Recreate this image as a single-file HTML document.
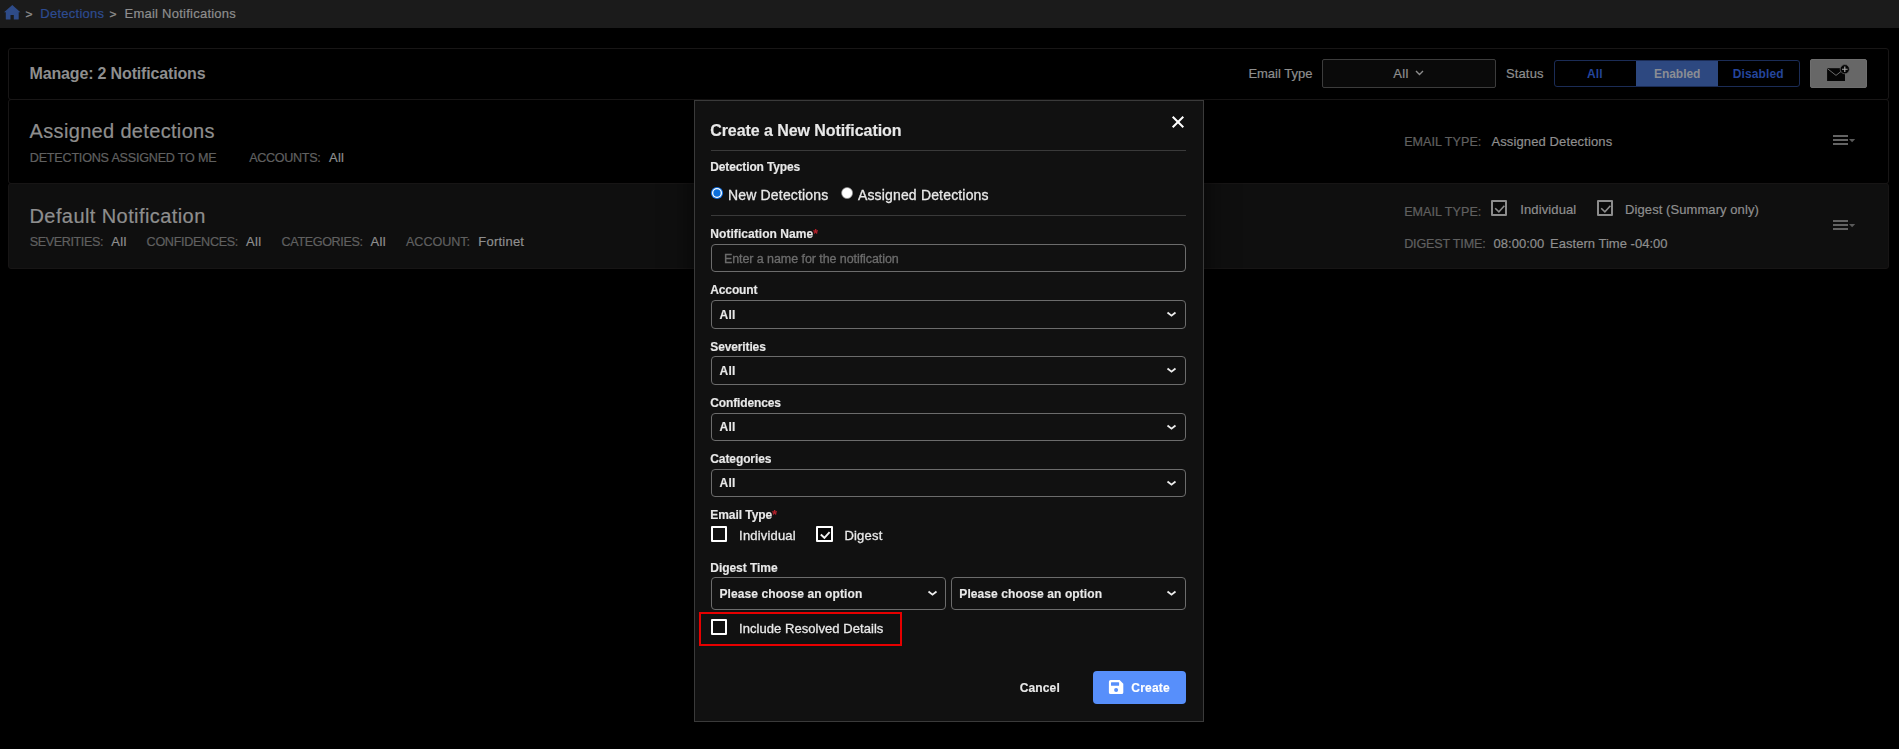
<!DOCTYPE html>
<html lang="en">
<head>
<meta charset="utf-8">
<title>Email Notifications</title>
<style>
*{box-sizing:border-box;margin:0;padding:0}
html,body{width:1899px;height:749px;overflow:hidden;background:#000}
body{font-family:"Liberation Sans",Arial,sans-serif;position:relative}
.tx,.b{position:absolute;white-space:nowrap}
.layer{position:absolute;left:0;top:0;width:1899px;height:749px;will-change:transform}
.rg{-webkit-text-stroke:0.2px currentColor}
.layer .tx{-webkit-text-stroke:0.15px currentColor}
.layer .rg{-webkit-text-stroke:0.3px currentColor}
.sel{position:absolute;border:1px solid #6c6c6c;border-radius:4px;background:#111}
.cb{position:absolute;width:16px;height:16px;border:2px solid #fff;border-radius:1px}
</style>
</head>
<body>
<!-- breadcrumb bar -->
<div class="b" style="left:0;top:0;width:1899px;height:28px;background:#1b1b1b"></div>
<svg class="b" style="left:4px;top:5px" width="17" height="15" viewBox="0 0 17 15"><path d="M8.3 0 L16.4 7.2 H14.7 V14 Q14.7 14.6 14.1 14.6 H9.8 V10.1 H6.5 V14.6 H2.4 Q1.8 14.6 1.8 14 V7.2 H0 Z" fill="#2e4b88"/></svg>
<!-- header card -->
<div class="b" style="left:8px;top:48px;width:1881px;height:52px;border:1px solid #181616;border-radius:3px"></div>
<div class="b" style="left:1322px;top:59px;width:174px;height:29px;border:1px solid #3c3c3c;border-radius:2px;background:#0a0a0a"></div>
<svg class="b" style="left:1415px;top:70px" width="9" height="6" viewBox="0 0 9 6"><path d="M1 1 L4.5 4.5 L8 1" fill="none" stroke="#8c8c8c" stroke-width="1.4"/></svg>
<div class="b" style="left:1554px;top:60px;width:246px;height:27px;border:1px solid #1b2c56;border-radius:3px;overflow:hidden">
  <div class="b" style="left:81px;top:-1px;width:82px;height:27px;background:#2d4880"></div>
</div>
<div class="b" style="left:1810px;top:59px;width:57px;height:29px;background:#676767;border:1px solid #6e6e6e;border-radius:2px"></div>
<svg class="b" style="left:1824px;top:62px" width="28" height="22" viewBox="0 0 28 22"><rect x="3.1" y="6.2" width="17.9" height="12.8" fill="#050505"/><path d="M3.4 6.6 L12 13.4 L20.6 6.6" fill="none" stroke="#6b6b6b" stroke-width="1"/><circle cx="20.8" cy="7.2" r="4.6" fill="#050505" stroke="#676767" stroke-width="0.7"/><path d="M20.8 4.4 V10 M18 7.2 H23.6" stroke="#a8a8a8" stroke-width="1.15"/></svg>
<!-- row 1 -->
<div class="b" style="left:8px;top:99px;width:1881px;height:85px;border:1px solid #181616;border-radius:3px"></div>
<svg class="b" style="left:1833px;top:135px" width="23" height="11" viewBox="0 0 23 11"><path d="M0 0 H15 V2 H0 Z M0 4 H15 V6 H0 Z M0 8 H15 V10 H0 Z" fill="#636363"/><path d="M16 4 H22.2 L19.1 7.2 Z" fill="#5a5a5a"/></svg>
<!-- row 2 -->
<div class="b" style="left:8px;top:183px;width:1881px;height:86px;background:#0f0f0f;border:1px solid #171515;border-radius:3px"></div>
<svg class="b" style="left:1833px;top:220px" width="23" height="11" viewBox="0 0 23 11"><path d="M0 0 H15 V2 H0 Z M0 4 H15 V6 H0 Z M0 8 H15 V10 H0 Z" fill="#636363"/><path d="M16 4 H22.2 L19.1 7.2 Z" fill="#5a5a5a"/></svg>
<div class="cb" style="left:1491px;top:200px;border-color:#8c8c8c;background:#0a0a0a"></div>
<svg class="b" style="left:1491px;top:200px" width="16" height="16" viewBox="0 0 16 16"><path d="M4.2 8.2 L7.9 11.8 L13.4 5.8" fill="none" stroke="#8c8c8c" stroke-width="1.6"/></svg>
<div class="cb" style="left:1597px;top:200px;border-color:#8c8c8c;background:#0a0a0a"></div>
<svg class="b" style="left:1597px;top:200px" width="16" height="16" viewBox="0 0 16 16"><path d="M4.2 8.2 L7.9 11.8 L13.4 5.8" fill="none" stroke="#8c8c8c" stroke-width="1.6"/></svg>


<span class="tx rg" style="left:25.6px;top:7.5px;font-size:12px;line-height:12px;font-weight:normal;color:#8e8e8e;letter-spacing:0.404px;transform:scaleY(.88);transform-origin:50% 70%;-webkit-text-stroke:0.35px currentColor">&gt;</span>
<span class="tx rg" style="left:40.3px;top:7.0px;font-size:13px;line-height:13px;font-weight:normal;color:#2d4b91;letter-spacing:0.256px">Detections</span>
<span class="tx rg" style="left:109.4px;top:7.5px;font-size:12px;line-height:12px;font-weight:normal;color:#8e8e8e;letter-spacing:0.104px;transform:scaleY(.88);transform-origin:50% 70%;-webkit-text-stroke:0.35px currentColor">&gt;</span>
<span class="tx rg" style="left:124.5px;top:7.0px;font-size:13px;line-height:13px;font-weight:normal;color:#8e8e8e;letter-spacing:0.244px">Email Notifications</span>
<span class="tx" style="left:29.5px;top:66.0px;font-size:16px;line-height:16px;font-weight:bold;color:#8e8e8e;letter-spacing:-0.157px">Manage: 2 Notifications</span>
<span class="tx rg" style="left:1248.4px;top:67.0px;font-size:13px;line-height:13px;font-weight:normal;color:#8e8e8e;letter-spacing:-0.010px">Email Type</span>
<span class="tx rg" style="left:1393.3px;top:67.0px;font-size:13px;line-height:13px;font-weight:normal;color:#8e8e8e;letter-spacing:0.376px">All</span>
<span class="tx rg" style="left:1505.9px;top:67.0px;font-size:13px;line-height:13px;font-weight:normal;color:#8e8e8e;letter-spacing:0.153px">Status</span>
<span class="tx" style="left:1586.9px;top:68.0px;font-size:12px;line-height:12px;font-weight:bold;color:#24459b;letter-spacing:0.159px">All</span>
<span class="tx" style="left:1654.0px;top:68.0px;font-size:12px;line-height:12px;font-weight:bold;color:#8a8d94;letter-spacing:-0.053px">Enabled</span>
<span class="tx" style="left:1732.8px;top:68.0px;font-size:12px;line-height:12px;font-weight:bold;color:#24459b;letter-spacing:0.101px">Disabled</span>
<span class="tx rg" style="left:29.6px;top:121.0px;font-size:20px;line-height:20px;font-weight:normal;color:#8e8e8e;letter-spacing:0.331px">Assigned detections</span>
<span class="tx rg" style="left:29.8px;top:152.0px;font-size:12.6px;line-height:12.6px;font-weight:normal;color:#606060;letter-spacing:-0.217px">DETECTIONS ASSIGNED TO ME</span>
<span class="tx rg" style="left:249.3px;top:152.0px;font-size:12.6px;line-height:12.6px;font-weight:normal;color:#606060;letter-spacing:-0.346px">ACCOUNTS:</span>
<span class="tx rg" style="left:329.0px;top:151.0px;font-size:13px;line-height:13px;font-weight:normal;color:#8e8e8e;letter-spacing:0.209px">All</span>
<span class="tx rg" style="left:1404.2px;top:136.0px;font-size:12.6px;line-height:12.6px;font-weight:normal;color:#606060;letter-spacing:0.014px">EMAIL TYPE:</span>
<span class="tx rg" style="left:1491.4px;top:135.0px;font-size:13px;line-height:13px;font-weight:normal;color:#8e8e8e;letter-spacing:0.124px">Assigned Detections</span>
<span class="tx rg" style="left:29.5px;top:206.0px;font-size:20px;line-height:20px;font-weight:normal;color:#8e8e8e;letter-spacing:0.416px">Default Notification</span>
<span class="tx rg" style="left:29.7px;top:236.0px;font-size:12.6px;line-height:12.6px;font-weight:normal;color:#606060;letter-spacing:-0.394px">SEVERITIES:</span>
<span class="tx rg" style="left:111.3px;top:235.0px;font-size:13px;line-height:13px;font-weight:normal;color:#8e8e8e;letter-spacing:0.276px">All</span>
<span class="tx rg" style="left:146.6px;top:236.0px;font-size:12.6px;line-height:12.6px;font-weight:normal;color:#606060;letter-spacing:-0.310px">CONFIDENCES:</span>
<span class="tx rg" style="left:246.0px;top:235.0px;font-size:13px;line-height:13px;font-weight:normal;color:#8e8e8e;letter-spacing:0.309px">All</span>
<span class="tx rg" style="left:281.6px;top:236.0px;font-size:12.6px;line-height:12.6px;font-weight:normal;color:#606060;letter-spacing:-0.371px">CATEGORIES:</span>
<span class="tx rg" style="left:370.6px;top:235.0px;font-size:13px;line-height:13px;font-weight:normal;color:#8e8e8e;letter-spacing:0.276px">All</span>
<span class="tx rg" style="left:406.0px;top:236.0px;font-size:12.6px;line-height:12.6px;font-weight:normal;color:#606060;letter-spacing:-0.052px">ACCOUNT:</span>
<span class="tx rg" style="left:478.3px;top:235.0px;font-size:13px;line-height:13px;font-weight:normal;color:#8e8e8e;letter-spacing:0.225px">Fortinet</span>
<span class="tx rg" style="left:1404.2px;top:206.0px;font-size:12.6px;line-height:12.6px;font-weight:normal;color:#606060;letter-spacing:0.014px">EMAIL TYPE:</span>
<span class="tx rg" style="left:1520.2px;top:203.0px;font-size:13px;line-height:13px;font-weight:normal;color:#8e8e8e;letter-spacing:0.124px">Individual</span>
<span class="tx rg" style="left:1625.1px;top:203.0px;font-size:13px;line-height:13px;font-weight:normal;color:#8e8e8e;letter-spacing:0.075px">Digest (Summary only)</span>
<span class="tx rg" style="left:1404.2px;top:238.0px;font-size:12.6px;line-height:12.6px;font-weight:normal;color:#606060;letter-spacing:-0.180px">DIGEST TIME:</span>
<span class="tx rg" style="left:1493.6px;top:237.0px;font-size:13px;line-height:13px;font-weight:normal;color:#8e8e8e;letter-spacing:0.021px">08:00:00</span>
<span class="tx rg" style="left:1550.1px;top:237.0px;font-size:13px;line-height:13px;font-weight:normal;color:#8e8e8e;letter-spacing:0.022px">Eastern Time -04:00</span>
<div class="layer">
<!-- modal -->
<div class="b" style="left:694px;top:100px;width:510px;height:622px;background:#111;border:1px solid #3a3a3a;box-shadow:0 0 26px rgba(0,0,0,.65)"></div>
<svg class="b" style="left:1171px;top:115px" width="14" height="14" viewBox="0 0 14 14"><path d="M1.7 1.7 L12.3 12.3 M12.3 1.7 L1.7 12.3" stroke="#fff" stroke-width="2"/></svg>
<div class="b" style="left:711px;top:150px;width:475px;height:1px;background:#3a3a3a"></div>
<div class="b" style="left:711px;top:215px;width:475px;height:1px;background:#3a3a3a"></div>
<!-- radios -->
<svg class="b" style="left:710px;top:186px" width="14" height="14" viewBox="0 0 14 14"><circle cx="7" cy="7" r="6.1" fill="#1273e6"/><circle cx="7" cy="7" r="5" fill="#fff"/><circle cx="7" cy="7" r="3.7" fill="#0b6fdc"/></svg>
<svg class="b" style="left:840px;top:186px" width="14" height="14" viewBox="0 0 14 14"><circle cx="7.1" cy="7" r="5.5" fill="#fff" stroke="#8a8a8a" stroke-width="0.7"/></svg>
<!-- input + selects -->
<div class="sel" style="left:711px;top:244px;width:475px;height:28px"></div>
<div class="sel" style="left:711px;top:300px;width:475px;height:29px"></div>
<div class="sel" style="left:711px;top:356px;width:475px;height:29px"></div>
<div class="sel" style="left:711px;top:413px;width:475px;height:28px"></div>
<div class="sel" style="left:711px;top:469px;width:475px;height:28px"></div>
<svg class="b" style="left:1166px;top:311px" width="11" height="7" viewBox="0 0 11 7"><path d="M1.5 1.5 L5.5 4.7 L9.5 1.5" fill="none" stroke="#ececec" stroke-width="1.8"/></svg>
<svg class="b" style="left:1166px;top:367px" width="11" height="7" viewBox="0 0 11 7"><path d="M1.5 1.5 L5.5 4.7 L9.5 1.5" fill="none" stroke="#ececec" stroke-width="1.8"/></svg>
<svg class="b" style="left:1166px;top:424px" width="11" height="7" viewBox="0 0 11 7"><path d="M1.5 1.5 L5.5 4.7 L9.5 1.5" fill="none" stroke="#ececec" stroke-width="1.8"/></svg>
<svg class="b" style="left:1166px;top:480px" width="11" height="7" viewBox="0 0 11 7"><path d="M1.5 1.5 L5.5 4.7 L9.5 1.5" fill="none" stroke="#ececec" stroke-width="1.8"/></svg>
<!-- email type checkboxes -->
<div class="cb" style="left:711px;top:526px"></div>
<div class="cb" style="left:816px;top:526px;width:17px;background:#050505"></div>
<svg class="b" style="left:816px;top:526px" width="17" height="16" viewBox="0 0 17 16"><path d="M4.8 8.5 L8.4 11.8 L13.6 6.2" fill="none" stroke="#f2f2f2" stroke-width="1.9"/></svg>
<!-- digest time selects -->
<div class="sel" style="left:711px;top:577px;width:235px;height:33px"></div>
<div class="sel" style="left:951px;top:577px;width:235px;height:33px"></div>
<svg class="b" style="left:927px;top:590px" width="11" height="7" viewBox="0 0 11 7"><path d="M1.5 1.5 L5.5 4.7 L9.5 1.5" fill="none" stroke="#ececec" stroke-width="1.8"/></svg>
<svg class="b" style="left:1166px;top:590px" width="11" height="7" viewBox="0 0 11 7"><path d="M1.5 1.5 L5.5 4.7 L9.5 1.5" fill="none" stroke="#ececec" stroke-width="1.8"/></svg>
<!-- include resolved -->
<div class="cb" style="left:711px;top:619px"></div>
<div class="b" style="left:699px;top:612px;width:203px;height:34px;border:2px solid #e60000"></div>
<!-- create button -->
<div class="b" style="left:1093px;top:671px;width:93px;height:33px;background:#578ffb;border-radius:4px"></div>
<svg class="b" style="left:1108px;top:679px" width="17" height="17" viewBox="0 0 17 17"><path d="M2.7 1 H11.6 L15.3 4.7 V13.4 Q15.3 15.1 13.6 15.1 H2.6 Q0.9 15.1 0.9 13.4 V2.8 Q0.9 1 2.7 1 Z M3.6 3.2 Q3 3.2 3 3.8 V6.2 Q3 6.8 3.6 6.8 H10.5 Q11.1 6.8 11.1 6.2 V3.8 Q11.1 3.2 10.5 3.2 Z M8.1 9 A2 2 0 1 0 8.1 13 A2 2 0 1 0 8.1 9 Z" fill="#fff" fill-rule="evenodd"/></svg>

<span class="tx" style="left:710.2px;top:123.0px;font-size:16px;line-height:16px;font-weight:bold;color:#e8e8e8;letter-spacing:-0.067px">Create a New Notification</span>
<span class="tx" style="left:710.3px;top:161.0px;font-size:12px;line-height:12px;font-weight:bold;color:#e8e8e8;letter-spacing:-0.133px">Detection Types</span>
<span class="tx rg" style="left:728.0px;top:188.0px;font-size:14px;line-height:14px;font-weight:normal;color:#e8e8e8;letter-spacing:0.171px">New Detections</span>
<span class="tx rg" style="left:857.9px;top:188.0px;font-size:14px;line-height:14px;font-weight:normal;color:#e8e8e8;letter-spacing:0.168px">Assigned Detections</span>
<span class="tx" style="left:710.3px;top:228.0px;font-size:12px;line-height:12px;font-weight:bold;color:#e8e8e8;letter-spacing:0.057px">Notification Name<span style="color:#b8222c">*</span></span>
<span class="tx rg" style="left:723.9px;top:253.0px;font-size:12.5px;line-height:12.5px;font-weight:normal;color:#6c6c6c;letter-spacing:-0.071px">Enter a name for the notification</span>
<span class="tx" style="left:710.3px;top:284.0px;font-size:12px;line-height:12px;font-weight:bold;color:#e8e8e8;letter-spacing:-0.140px">Account</span>
<span class="tx" style="left:719.6px;top:309.0px;font-size:12px;line-height:12px;font-weight:bold;color:#e8e8e8;letter-spacing:0.192px">All</span>
<span class="tx" style="left:710.3px;top:341.0px;font-size:12px;line-height:12px;font-weight:bold;color:#e8e8e8;letter-spacing:-0.130px">Severities</span>
<span class="tx" style="left:719.6px;top:365.0px;font-size:12px;line-height:12px;font-weight:bold;color:#e8e8e8;letter-spacing:0.192px">All</span>
<span class="tx" style="left:710.3px;top:397.0px;font-size:12px;line-height:12px;font-weight:bold;color:#e8e8e8;letter-spacing:-0.136px">Confidences</span>
<span class="tx" style="left:719.6px;top:421.0px;font-size:12px;line-height:12px;font-weight:bold;color:#e8e8e8;letter-spacing:0.192px">All</span>
<span class="tx" style="left:710.3px;top:453.0px;font-size:12px;line-height:12px;font-weight:bold;color:#e8e8e8;letter-spacing:-0.101px">Categories</span>
<span class="tx" style="left:719.6px;top:477.0px;font-size:12px;line-height:12px;font-weight:bold;color:#e8e8e8;letter-spacing:0.192px">All</span>
<span class="tx" style="left:710.3px;top:509.0px;font-size:12px;line-height:12px;font-weight:bold;color:#e8e8e8;letter-spacing:-0.056px">Email Type<span style="color:#b8222c">*</span></span>
<span class="tx rg" style="left:739.1px;top:529.0px;font-size:13px;line-height:13px;font-weight:normal;color:#e8e8e8;letter-spacing:0.184px">Individual</span>
<span class="tx rg" style="left:844.4px;top:529.0px;font-size:13px;line-height:13px;font-weight:normal;color:#e8e8e8;letter-spacing:0.220px">Digest</span>
<span class="tx" style="left:710.3px;top:562.0px;font-size:12px;line-height:12px;font-weight:bold;color:#e8e8e8;letter-spacing:-0.045px">Digest Time</span>
<span class="tx" style="left:719.5px;top:588.0px;font-size:12px;line-height:12px;font-weight:bold;color:#e8e8e8;letter-spacing:0.092px">Please choose an option</span>
<span class="tx" style="left:959.3px;top:588.0px;font-size:12px;line-height:12px;font-weight:bold;color:#e8e8e8;letter-spacing:0.092px">Please choose an option</span>
<span class="tx rg" style="left:739.1px;top:622.0px;font-size:13px;line-height:13px;font-weight:normal;color:#e8e8e8;letter-spacing:0.050px">Include Resolved Details</span>
<span class="tx" style="left:1019.7px;top:682.0px;font-size:12px;line-height:12px;font-weight:bold;color:#e8e8e8;letter-spacing:0.143px">Cancel</span>
<span class="tx" style="left:1131.3px;top:682.0px;font-size:12px;line-height:12px;font-weight:bold;color:#fff;letter-spacing:0.210px">Create</span>
</div>
</body>
</html>
